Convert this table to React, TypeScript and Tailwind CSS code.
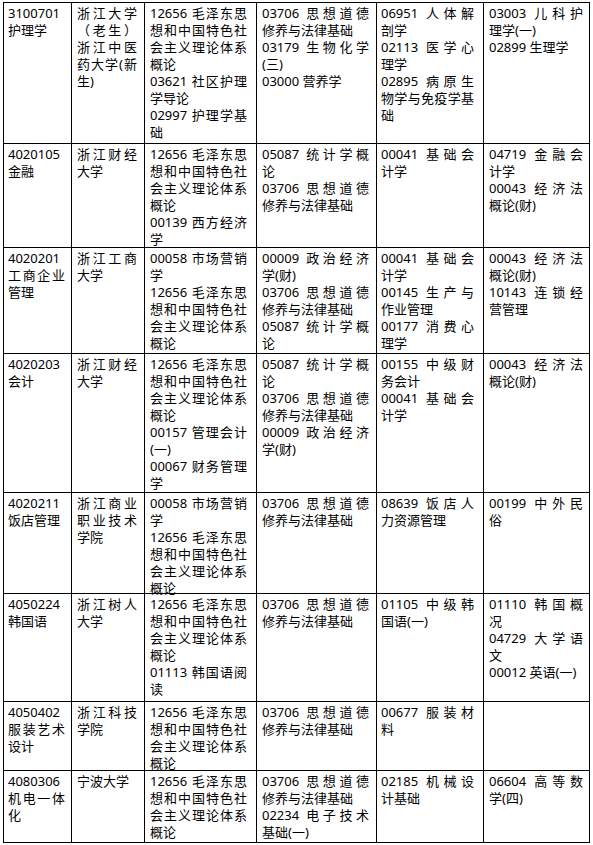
import React from 'react'

// each cell is a list of items, each item a list of wrapped lines
type Cell = string[][]
type Row = { h: string; cells: Cell[] }

const mao = ['12656 毛泽东思', '想和中国特色社', '会主义理论体系', '概论']
const sixiang = ['03706 思想道德', '修养与法律基础']

const rows: Row[] = [
  {
    h: 'h-[141px]',
    cells: [
      [['3100701', '护理学']],
      [['浙江大学', '（老生）', '浙江中医', '药大学(新', '生)']],
      [mao, ['03621 社区护理', '学导论'], ['02997 护理学基', '础']],
      [sixiang, ['03179 生物化学', '(三)'], ['03000 营养学']],
      [['06951 人体解', '剖学'], ['02113 医学心', '理学'], ['02895 病原生', '物学与免疫学基', '础']],
      [['03003 儿科护', '理学(一)'], ['02899 生理学']],
    ],
  },
  {
    h: 'h-[104px]',
    cells: [
      [['4020105', '金融']],
      [['浙江财经', '大学']],
      [mao, ['00139 西方经济', '学']],
      [['05087 统计学概', '论'], sixiang],
      [['00041 基础会', '计学']],
      [['04719 金融会', '计学'], ['00043 经济法', '概论(财)']],
    ],
  },
  {
    h: 'h-[106px]',
    cells: [
      [['4020201', '工商企业', '管理']],
      [['浙江工商', '大学']],
      [['00058 市场营销', '学'], mao],
      [['00009 政治经济', '学(财)'], sixiang, ['05087 统计学概', '论']],
      [['00041 基础会', '计学'], ['00145 生产与', '作业管理'], ['00177 消费心', '理学']],
      [['00043 经济法', '概论(财)'], ['10143 连锁经', '营管理']],
    ],
  },
  {
    h: 'h-[139px]',
    cells: [
      [['4020203', '会计']],
      [['浙江财经', '大学']],
      [mao, ['00157 管理会计', '(一)'], ['00067 财务管理', '学']],
      [['05087 统计学概', '论'], sixiang, ['00009 政治经济', '学(财)']],
      [['00155 中级财', '务会计'], ['00041 基础会', '计学']],
      [['00043 经济法', '概论(财)']],
    ],
  },
  {
    h: 'h-[101px]',
    cells: [
      [['4020211', '饭店管理']],
      [['浙江商业', '职业技术', '学院']],
      [['00058 市场营销', '学'], mao],
      [sixiang],
      [['08639 饭店人', '力资源管理']],
      [['00199 中外民', '俗']],
    ],
  },
  {
    h: 'h-[108px]',
    cells: [
      [['4050224', '韩国语']],
      [['浙江树人', '大学']],
      [mao, ['01113 韩国语阅', '读']],
      [sixiang],
      [['01105 中级韩', '国语(一)']],
      [['01110 韩国概', '况'], ['04729 大学语', '文'], ['00012 英语(一)']],
    ],
  },
  {
    h: 'h-[69px]',
    cells: [
      [['4050402', '服装艺术', '设计']],
      [['浙江科技', '学院']],
      [mao],
      [sixiang],
      [['00677 服装材', '料']],
      [],
    ],
  },
  {
    h: 'h-[72px]',
    cells: [
      [['4080306', '机电一体', '化']],
      [['宁波大学']],
      [mao],
      [sixiang, ['02234 电子技术', '基础(一)']],
      [['02185 机械设', '计基础']],
      [['06604 高等数', '学(四)']],
    ],
  },
]

// padding-left and text box width per column
const colPad = ['pl-[4px]', 'pl-[5px]', 'pl-[5px]', 'pl-[5px]', 'pl-[4px]', 'pl-[5px]']
const colBox = ['w-[57px]', 'w-[60px]', 'w-[97px]', 'w-[107px]', 'w-[93px]', 'w-[94px]']

const TableCell = ({ cell, col, h }: { cell: Cell; col: number; h: string }) => (
  <div className={`${h} border-r border-b border-black pt-[1.5px] ${colPad[col]}`}>
    <div className={colBox[col]}>
      {cell.map((item, i) => (
        <div key={i}>
          {item.map((line, j) => (
            <div
              key={j}
              className={
                j < item.length - 1
                  ? 'whitespace-nowrap text-justify [text-align-last:justify]'
                  : 'whitespace-nowrap'
              }
            >
              {line}
            </div>
          ))}
        </div>
      ))}
    </div>
  </div>
)

export default function App() {
  return (
    <div className="min-h-[845px] bg-white pt-[2px] pl-[3px] text-[13px] leading-[17.1px] text-black font-['Noto_Sans','Noto_Sans_CJK_SC',sans-serif]">
      <div className="grid w-[587px] grid-cols-[68px_73px_112px_120px_107px_106px] border-t border-l border-black">
        {rows.map((row, r) =>
          row.cells.map((cell, c) => <TableCell key={`${r}-${c}`} cell={cell} col={c} h={row.h} />),
        )}
      </div>
    </div>
  )
}
